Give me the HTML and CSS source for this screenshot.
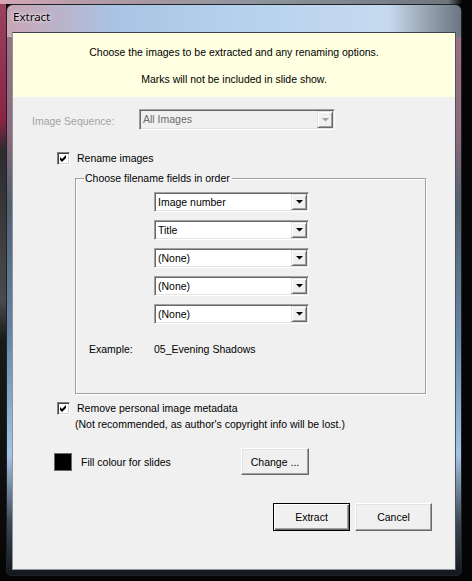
FILE: index.html
```
<!DOCTYPE html>
<html>
<head>
<meta charset="utf-8">
<title>Extract</title>
<link rel="stylesheet" href="styles.css">
</head>
<body>
<div class="desk">
  <div class="window">
    <div class="titlebar"><span class="title">Extract</span></div>
    <div class="client">
      <div class="banner">
        <p>Choose the images to be extracted and any renaming options.</p>
        <p class="banner-second">Marks will not be included in slide show.</p>
      </div>

      <div class="seq-row">
        <span class="seq-label">Image Sequence:</span>
        <div class="combo combo-disabled">
          <span class="combo-text">All Images</span>
          <span class="arrow"><svg width="7" height="4" viewBox="0 0 7 4"><polygon points="0,0 7,0 3.5,3.6"/></svg></span>
        </div>
      </div>

      <div class="check-row rename-row">
        <span class="checkbox"><svg width="11" height="11" viewBox="0 0 11 11"><polygon points="2,4 4,6 8,2 8,5 4,9 2,7"/></svg></span>
        <span class="check-label">Rename images</span>
      </div>

      <fieldset class="group">
        <legend>Choose filename fields in order</legend>
        <div class="combo-list">
          <div class="combo"><span class="combo-text">Image number</span><span class="arrow"><svg width="7" height="4" viewBox="0 0 7 4"><polygon points="0,0 7,0 3.5,3.6"/></svg></span></div>
          <div class="combo"><span class="combo-text">Title</span><span class="arrow"><svg width="7" height="4" viewBox="0 0 7 4"><polygon points="0,0 7,0 3.5,3.6"/></svg></span></div>
          <div class="combo"><span class="combo-text">(None)</span><span class="arrow"><svg width="7" height="4" viewBox="0 0 7 4"><polygon points="0,0 7,0 3.5,3.6"/></svg></span></div>
          <div class="combo"><span class="combo-text">(None)</span><span class="arrow"><svg width="7" height="4" viewBox="0 0 7 4"><polygon points="0,0 7,0 3.5,3.6"/></svg></span></div>
          <div class="combo"><span class="combo-text">(None)</span><span class="arrow"><svg width="7" height="4" viewBox="0 0 7 4"><polygon points="0,0 7,0 3.5,3.6"/></svg></span></div>
        </div>
        <div class="example">
          <span class="example-label">Example:</span>
          <span class="example-value">05_Evening Shadows</span>
        </div>
      </fieldset>

      <div class="check-row meta-row">
        <span class="checkbox"><svg width="11" height="11" viewBox="0 0 11 11"><polygon points="2,4 4,6 8,2 8,5 4,9 2,7"/></svg></span>
        <span class="check-label">Remove personal image metadata</span>
      </div>
      <div class="note">(Not recommended, as author's copyright info will be lost.)</div>

      <div class="fill-row">
        <span class="swatch"></span>
        <span class="fill-label">Fill colour for slides</span>
        <button class="btn btn-change">Change ...</button>
      </div>

      <div class="actions">
        <button class="btn btn-default">Extract</button>
        <button class="btn">Cancel</button>
      </div>
    </div>
  </div>
</div>
</body>
</html>
```
FILE: styles.css
```
html, body {
  margin: 0;
  padding: 0;
  background: #050505;
}

.desk {
  width: 472px;
  height: 581px;
  box-sizing: border-box;
  padding: 4px 0 0 6px;
  overflow: hidden;
  background:
    linear-gradient(to right, #d6a6b6 0, #b49aa6 20%, #8e949c 55%, #70767e 95%, #050505 98%) top left / 100% 4px no-repeat,
    linear-gradient(to bottom, #9a4460 0, #8a2444 120px, #2c2c2e 150px, #4a4a4c 300px, #1a1a1a 340px, #050505 100%) top left / 6px 100% no-repeat,
    #050505;
  font-family: "Liberation Sans", Arial, sans-serif;
  font-size: 10.5px;
  color: #000;
}

.window {
  width: 456px;
  height: 572px;
  box-sizing: border-box;
  border: 1px solid #1e232a;
  border-radius: 7px 7px 5px 5px;
  padding: 0 5px 5px 5px;
  background:
    linear-gradient(to right, #c9a6b6 0, #bdb0c4 9%, #a9c4e4 24%, #b6d1ed 50%, #c6daef 84%, #9aa6b2 92%, #6c7682 100%) top left / 100% 32px no-repeat,
    linear-gradient(to bottom, #a07284 0, #8e6a7c 130px, #52606e 200px, #6686a6 330px, #a4c4e4 450px, #3a4450 520px, #14181d 100%);
}

.titlebar {
  height: 27px;
  box-sizing: border-box;
  padding: 4px 0 0 1px;
}

.title {
  font-family: "Noto Sans", "Open Sans", sans-serif;
  font-size: 11.5px;
  line-height: 16px;
  color: #000;
  text-shadow: 0 0 5px rgba(255, 255, 255, 0.9), 0 0 2px rgba(255, 255, 255, 0.7);
}

.client {
  width: 444px;
  height: 538px;
  box-sizing: border-box;
  border: 1px solid #8c949e;
  border-top-color: #3c4450;
  border-right-color: #4a525c;
  background: #f0f0f0;
}

.banner {
  height: 64px;
  box-sizing: border-box;
  padding-top: 12px;
  background: #ffffe1;
  text-align: center;
}

.banner p {
  margin: 0;
  line-height: 14px;
}

.banner .banner-second {
  margin-top: 13px;
}

.seq-row {
  display: flex;
  align-items: center;
  margin-top: 12px;
  padding-left: 19px;
  height: 21px;
}

.seq-label {
  width: 107px;
  padding-top: 3px;
  line-height: 14px;
  color: #a3a3a3;
}

.combo {
  display: flex;
  align-items: stretch;
  width: 155px;
  height: 20px;
  box-sizing: border-box;
  padding: 1px;
  border: 1px solid;
  border-color: #a0a0a0 #ffffff #ffffff #a0a0a0;
  box-shadow: inset 1px 1px 0 #696969, inset -1px -1px 0 #e3e3e3;
  background: #fff;
}

.combo-disabled {
  width: 196px;
  height: 21px;
  background: #f0f0f0;
}

.combo-text {
  flex: 1;
  padding-left: 2px;
  line-height: 16px;
  white-space: nowrap;
  overflow: hidden;
}

.combo-disabled .combo-text {
  color: #6d6d6d;
  line-height: 16px;
}

.arrow {
  width: 16px;
  box-sizing: border-box;
  display: flex;
  align-items: center;
  justify-content: center;
  background: #f0f0f0;
  border: 1px solid;
  border-color: #e3e3e3 #696969 #696969 #e3e3e3;
  box-shadow: inset 1px 1px 0 #fff, inset -1px -1px 0 #a0a0a0;
}

.arrow svg {
  display: block;
  fill: #000;
}

.combo-disabled .arrow svg {
  fill: #a0a0a0;
}

.check-row {
  display: flex;
  align-items: center;
  height: 13px;
  padding-left: 44px;
}

.rename-row {
  margin-top: 22px;
}

.meta-row {
  margin-top: 8px;
}

.checkbox {
  width: 13px;
  height: 13px;
  box-sizing: border-box;
  border: 1px solid;
  border-color: #808080 #ffffff #ffffff #808080;
  box-shadow: inset 1px 1px 0 #404040, inset -1px -1px 0 #d4d0c8;
  background: #fff;
  display: flex;
  align-items: center;
  justify-content: center;
}

.checkbox svg {
  display: block;
  fill: #000;
}

.check-label {
  margin-left: 7px;
  line-height: 13px;
}

.group {
  margin: 6px 0 0 62px;
  width: 351px;
  box-sizing: border-box;
  padding: 7px 0 37px 0;
  min-width: 0;
  border: 1px solid #a0a0a0;
  box-shadow: inset 1px 1px 0 #fff, 1px 1px 0 #fff;
}

.group legend {
  margin-left: 8px;
  padding: 0 2px 0 1px;
  line-height: 14px;
}

.combo-list {
  display: flex;
  flex-direction: column;
  gap: 8px;
  margin-left: 78px;
}

.example {
  display: flex;
  margin-top: 18px;
  padding-left: 13px;
  line-height: 14px;
}

.example-label {
  width: 65px;
}

.note {
  margin: 2px 0 0 62px;
  line-height: 14px;
}

.fill-row {
  display: flex;
  align-items: center;
  height: 27px;
  margin-top: 17px;
  padding-left: 41px;
}

.swatch {
  width: 18px;
  height: 18px;
  box-sizing: border-box;
  border: 1px solid #6a6a6a;
  background: #000;
}

.fill-label {
  margin-left: 9px;
  width: 160px;
}

.btn {
  font-family: "Liberation Sans", Arial, sans-serif;
  font-size: 10.5px;
  color: #000;
  background: #f0f0f0;
  box-sizing: border-box;
  margin: 0;
  padding: 0;
  border: 1px solid;
  border-color: #fff #696969 #696969 #fff;
  box-shadow: inset -1px -1px 0 #a0a0a0, inset 1px 1px 0 #e3e3e3;
  border-radius: 0;
  width: 77px;
  height: 28px;
}

.btn-change {
  width: 68px;
  height: 27px;
}

.btn-default {
  border: 1px solid #000;
  box-shadow: inset 1px 1px 0 #fff, inset -1px -1px 0 #696969, inset -2px -2px 0 #a0a0a0;
}

.actions {
  display: flex;
  justify-content: flex-end;
  gap: 5px;
  margin-top: 28px;
  padding-right: 23px;
}
```
